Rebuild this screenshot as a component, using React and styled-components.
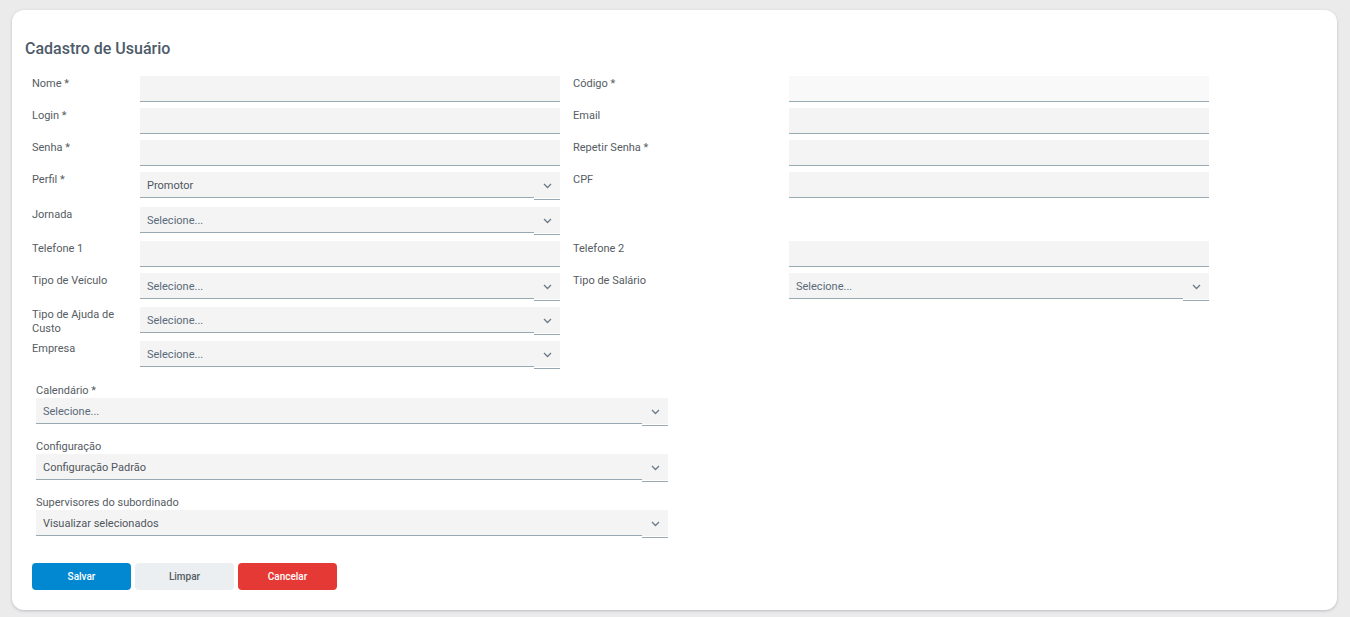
import React from 'react';
import styled, { createGlobalStyle } from 'styled-components';

const GlobalStyle = createGlobalStyle`
  html, body {
    margin: 0;
    padding: 0;
    background: #ebebeb;
    font-family: Roboto, "Liberation Sans", Arial, sans-serif;
  }
`;

const Page = styled.div`
  padding: 10px 13px 7px 12px;
`;

const Card = styled.div`
  background: #fff;
  border-radius: 12px;
  box-shadow: 0 1px 3px rgba(60, 70, 90, 0.28);
  height: 600px;
  box-sizing: border-box;
  padding: 29px 0 0 13px;
`;

const Title = styled.h1`
  margin: 0 0 17px 0;
  font-size: 16px;
  line-height: 20px;
  font-weight: 500;
  color: #4d5b69;
`;

const Rows = styled.div`
  padding-left: 7px;
`;

const Row = styled.div`
  display: flex;
  align-items: flex-start;
  margin-bottom: ${p => p.$gap}px;
`;

const Field = styled.div`
  display: flex;
  align-items: flex-start;
  margin-left: ${p => (p.$right ? 13 : 0)}px;
`;

const Label = styled.div`
  width: ${p => p.$w}px;
  flex: none;
  box-sizing: border-box;
  padding: 1px 22px 0 0;
  font-size: 11px;
  line-height: 14px;
  color: #555c63;
`;

const Input = styled.div`
  width: 420px;
  height: 26px;
  box-sizing: border-box;
  background: ${p => (p.$light ? '#f9f9f9' : '#f4f4f4')};
  border-bottom: 1px solid #98a9b4;
`;

const SelectBox = styled.div`
  display: flex;
  width: ${p => p.$w}px;
  height: 28px;
`;

const SelectValue = styled.div`
  flex: 1;
  height: 26px;
  box-sizing: border-box;
  background: #f4f4f4;
  border-bottom: 1px solid #98a9b4;
  padding: 1px 0 0 7px;
  display: flex;
  align-items: center;
  font-size: 11px;
  color: ${p => (p.$placeholder ? '#5a6a7a' : '#4f565d')};
`;

const Chevron = styled.div`
  width: 26px;
  height: 28px;
  box-sizing: border-box;
  background: linear-gradient(#f4f4f4 0 26px, #fff 26px);
  border-bottom: 1px solid #98a9b4;
  display: flex;
  align-items: flex-start;
  justify-content: center;
  padding-top: 11px;
`;

const Bottom = styled.div`
  display: flex;
  flex-direction: column;
  gap: 14px;
  margin: 15px 0 0 11px;
`;

const Block = styled.div`
  width: 632px;
`;

const BlockLabel = styled.div`
  font-size: 11px;
  line-height: 14px;
  color: #555c63;
`;

const Buttons = styled.div`
  display: flex;
  gap: 4px;
  margin: 25px 0 0 7px;
`;

const Button = styled.button`
  width: 99px;
  height: 27px;
  border: none;
  border-radius: 4px;
  font-family: inherit;
  font-size: 10px;
  font-weight: 500;
  cursor: pointer;
  background: ${p => p.$bg};
  color: ${p => p.$color};
`;

const ChevronIcon = () => (
  <svg width="9" height="6" viewBox="0 0 9 6">
    <path d="M1 1l3.5 3.5L8 1" fill="none" stroke="#6b7a88" strokeWidth="1.3" />
  </svg>
);

const Select = ({ value, placeholder, w = 420 }) => (
  <SelectBox $w={w}>
    <SelectValue $placeholder={placeholder}>{value}</SelectValue>
    <Chevron>
      <ChevronIcon />
    </Chevron>
  </SelectBox>
);

const FormField = ({ label, type, value, right, light }) => (
  <Field $right={right}>
    <Label $w={right ? 216 : 108}>{label}</Label>
    {type === 'select' ? (
      <Select value={value} placeholder={value === 'Selecione...'} />
    ) : (
      <Input $light={light} />
    )}
  </Field>
);

const rows = [
  { gap: 6, fields: [{ label: 'Nome *' }, { label: 'Código *', light: true }] },
  { gap: 6, fields: [{ label: 'Login *' }, { label: 'Email' }] },
  { gap: 6, fields: [{ label: 'Senha *' }, { label: 'Repetir Senha *' }] },
  { gap: 7, fields: [{ label: 'Perfil *', type: 'select', value: 'Promotor' }, { label: 'CPF' }] },
  { gap: 6, fields: [{ label: 'Jornada', type: 'select', value: 'Selecione...' }] },
  { gap: 6, fields: [{ label: 'Telefone 1' }, { label: 'Telefone 2' }] },
  {
    gap: 6,
    fields: [
      { label: 'Tipo de Veículo', type: 'select', value: 'Selecione...' },
      { label: 'Tipo de Salário', type: 'select', value: 'Selecione...' },
    ],
  },
  { gap: 5, fields: [{ label: 'Tipo de Ajuda de Custo', type: 'select', value: 'Selecione...' }] },
  { gap: 0, fields: [{ label: 'Empresa', type: 'select', value: 'Selecione...' }] },
];

const blocks = [
  { label: 'Calendário *', value: 'Selecione...' },
  { label: 'Configuração', value: 'Configuração Padrão' },
  { label: 'Supervisores do subordinado', value: 'Visualizar selecionados' },
];

const App = () => (
  <>
    <GlobalStyle />
    <Page>
      <Card>
        <Title>Cadastro de Usuário</Title>
        <Rows>
          {rows.map((r, i) => (
            <Row key={i} $gap={r.gap}>
              {r.fields.map((f, j) => (
                <FormField key={j} {...f} right={j === 1} />
              ))}
            </Row>
          ))}
        </Rows>
        <Bottom>
          {blocks.map(b => (
            <Block key={b.label}>
              <BlockLabel>{b.label}</BlockLabel>
              <Select w={632} value={b.value} placeholder={b.value === 'Selecione...'} />
            </Block>
          ))}
        </Bottom>
        <Buttons>
          <Button $bg="#0288d1" $color="#fff">Salvar</Button>
          <Button $bg="#eceff1" $color="#555c63">Limpar</Button>
          <Button $bg="#e53935" $color="#fff">Cancelar</Button>
        </Buttons>
      </Card>
    </Page>
  </>
);

export default App;
